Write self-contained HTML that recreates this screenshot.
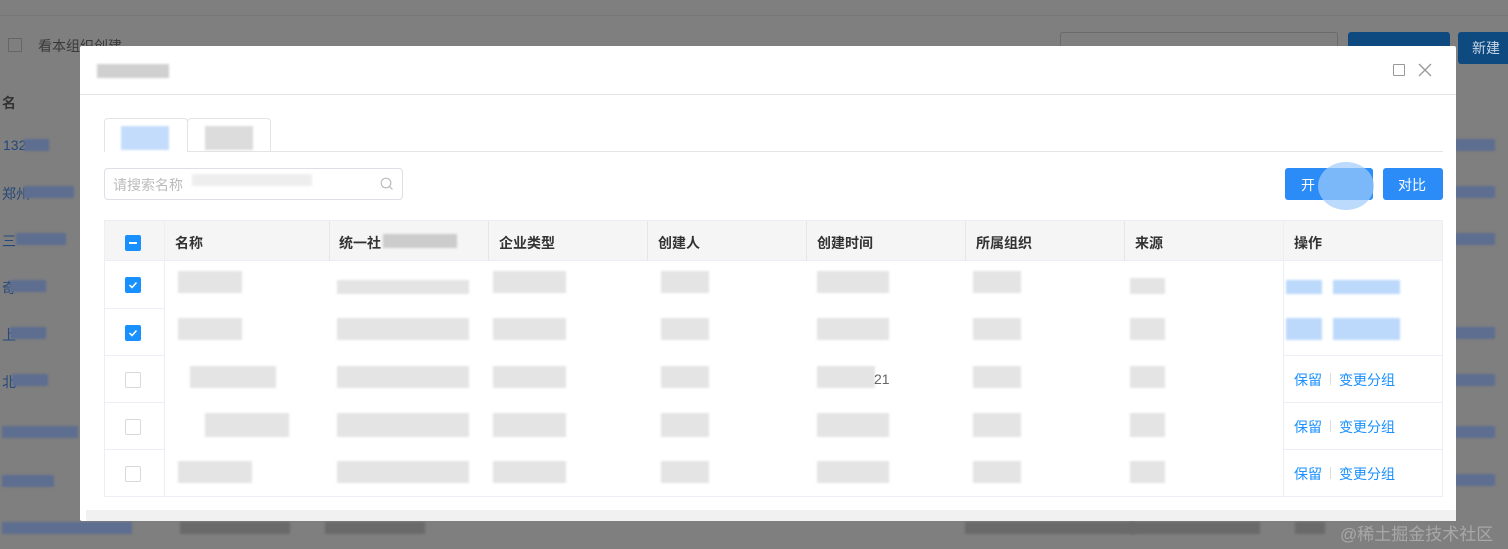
<!DOCTYPE html>
<html><head><meta charset="utf-8"><style>
*{margin:0;padding:0;box-sizing:border-box}
body{width:1508px;height:549px;overflow:hidden;background:#7f7f7f;font-family:"Liberation Sans","Noto Sans CJK SC",sans-serif;font-size:14px;position:relative}
.a{position:absolute}
.b{position:absolute;background:#e4e4e4;filter:blur(1px)}
.bg{position:absolute;background:#5e6e90;filter:blur(1px)}
.d{position:absolute;background:#6a6a6a;filter:blur(1px)}
.th{position:absolute;top:233px;font-size:14px;color:#333;font-weight:bold}
.op{position:absolute;color:#1890ff;font-size:14px}
.cb{position:absolute;left:125px;width:16px;height:16px;border:1px solid #d9d9d9;border-radius:2px;background:#fff}
.cb.on{background:#1890ff;border-color:#1890ff}
</style></head><body>
<!-- background page -->
<div class="a" style="left:0;top:15px;width:1508px;height:1px;background:#777"></div>
<div class="a" style="left:8px;top:38px;width:14px;height:14px;border:1px solid #666"></div>
<div class="a" style="left:38px;top:36px;color:#3a3a3a;font-size:14px">看本组织创建</div>
<div class="a" style="left:1060px;top:32px;width:278px;height:30px;border:1px solid #6a6a6a;border-radius:3px"></div>
<div class="a" style="left:1348px;top:32px;width:102px;height:32px;background:#0e4a80;border-radius:3px"></div>
<div class="a" style="left:1458px;top:32px;width:60px;height:32px;background:#0e4a80;border-radius:3px;color:#c8d6e6;padding:6px 0 0 14px">新建</div>
<div class="a" style="left:2px;top:93px;color:#333;font-weight:bold">名</div>
<div class="a" style="left:3px;top:137px;color:#24487a">132</div><div class="bg" style="left:24px;top:139px;width:25px;height:12px"></div>
<div class="a" style="left:2px;top:184px;color:#24487a">郑州</div><div class="bg" style="left:24px;top:186px;width:50px;height:12px"></div>
<div class="a" style="left:2px;top:231px;color:#24487a">三</div><div class="bg" style="left:16px;top:233px;width:50px;height:12px"></div>
<div class="a" style="left:2px;top:278px;color:#24487a">奇</div><div class="bg" style="left:10px;top:280px;width:36px;height:12px"></div>
<div class="a" style="left:2px;top:325px;color:#24487a">上</div><div class="bg" style="left:10px;top:327px;width:36px;height:12px"></div>
<div class="a" style="left:2px;top:372px;color:#24487a">北</div><div class="bg" style="left:12px;top:374px;width:36px;height:12px"></div>
<div class="bg" style="left:2px;top:426px;width:76px;height:12px"></div>
<div class="bg" style="left:2px;top:475px;width:52px;height:12px"></div>
<div class="bg" style="left:2px;top:522px;width:130px;height:12px"></div>
<div class="d" style="left:180px;top:522px;width:110px;height:12px"></div>
<div class="d" style="left:325px;top:522px;width:100px;height:12px"></div>
<div class="d" style="left:965px;top:522px;width:170px;height:12px"></div>
<div class="d" style="left:1130px;top:522px;width:130px;height:12px"></div>
<div class="d" style="left:1295px;top:522px;width:30px;height:12px"></div>
<div class="bg" style="left:1455px;top:139px;width:40px;height:12px"></div>
<div class="bg" style="left:1455px;top:186px;width:40px;height:12px"></div>
<div class="bg" style="left:1455px;top:233px;width:40px;height:12px"></div>
<div class="bg" style="left:1455px;top:327px;width:40px;height:12px"></div>
<div class="bg" style="left:1455px;top:374px;width:40px;height:12px"></div>
<div class="bg" style="left:1455px;top:426px;width:40px;height:12px"></div>
<div class="bg" style="left:1455px;top:474px;width:40px;height:12px"></div>
<div class="a" style="left:1340px;top:520px;color:#a8a8a8;font-size:17px">@稀土掘金技术社区</div>
<!-- modal -->
<div class="a" style="left:80px;top:46px;width:1376px;height:475px;background:#fff;border-radius:2px"></div>
<div class="a" style="left:86px;top:510px;width:1370px;height:11px;background:#f1f1f1"></div>
<div class="b" style="left:97px;top:64px;width:72px;height:14px;background:#d0d0d0"></div>
<div class="a" style="left:80px;top:94px;width:1376px;height:1px;background:#e4e4e4"></div>
<div class="a" style="left:1393px;top:64px;width:12px;height:12px;border:1.3px solid #999;border-radius:1px"></div>
<svg class="a" style="left:1418px;top:63px" width="14" height="14"><path d="M1 1L13 13M13 1L1 13" stroke="#999" stroke-width="1.3"/></svg>
<!-- tabs -->
<div class="a" style="left:104px;top:118px;width:84px;height:34px;border:1px solid #e4e4e4;border-bottom:none;border-radius:4px 4px 0 0"></div>
<div class="a" style="left:187px;top:118px;width:84px;height:33px;border:1px solid #e4e4e4;border-bottom:none;border-radius:4px 4px 0 0"></div>
<div class="a" style="left:104px;top:151px;width:1339px;height:1px;background:#e4e4e4"></div>
<div class="a" style="left:105px;top:151px;width:82px;height:1px;background:#fff"></div>
<div class="b" style="left:121px;top:126px;width:48px;height:24px;background:#c4dcfb"></div>
<div class="b" style="left:205px;top:126px;width:48px;height:24px;background:#dcdcdc"></div>
<!-- search -->
<div class="a" style="left:104px;top:168px;width:299px;height:32px;border:1px solid #dcdfe6;border-radius:4px"></div>
<div class="a" style="left:113px;top:175px;color:#bbb;font-size:14px">请搜索名称</div>
<div class="b" style="left:192px;top:174px;width:120px;height:12px;background:#eee"></div>
<svg class="a" style="left:380px;top:177px" width="14" height="14"><circle cx="6" cy="6" r="4.8" fill="none" stroke="#bbb" stroke-width="1.2"/><path d="M9.5 9.5L12.5 12.5" stroke="#bbb" stroke-width="1.2"/></svg>
<!-- buttons -->
<div class="a" style="left:1285px;top:168px;width:88px;height:32px;background:#2b8cf7;border-radius:3px;color:#fff;padding:7px 0 0 16px">开</div>
<div class="a" style="left:1318px;top:162px;width:56px;height:48px;border-radius:50%;background:#9ecbfb;opacity:.7"></div>
<div class="a" style="left:1383px;top:168px;width:60px;height:32px;background:#2b8cf7;border-radius:3px;color:#fff;padding:7px 0 0 15px">对比</div>
<!-- table -->
<div class="a" style="left:104px;top:220px;width:1339px;height:277px;border:1px solid #ebeef5"></div>
<div class="a" style="left:105px;top:221px;width:1337px;height:40px;background:#f5f5f5;border-bottom:1px solid #ebeef5"></div>
<div class="a" style="left:164px;top:221px;width:1px;height:276px;background:#ebeef5"></div>
<div class="a" style="left:329px;top:221px;width:1px;height:40px;background:#e6e6e6"></div>
<div class="a" style="left:488px;top:221px;width:1px;height:40px;background:#e6e6e6"></div>
<div class="a" style="left:647px;top:221px;width:1px;height:40px;background:#e6e6e6"></div>
<div class="a" style="left:806px;top:221px;width:1px;height:40px;background:#e6e6e6"></div>
<div class="a" style="left:965px;top:221px;width:1px;height:40px;background:#e6e6e6"></div>
<div class="a" style="left:1124px;top:221px;width:1px;height:40px;background:#e6e6e6"></div>
<div class="a" style="left:1283px;top:221px;width:1px;height:276px;background:#ebeef5"></div>
<div class="a" style="left:105px;top:308px;width:60px;height:1px;background:#ebeef5"></div>
<div class="a" style="left:105px;top:355px;width:60px;height:1px;background:#ebeef5"></div>
<div class="a" style="left:105px;top:402px;width:60px;height:1px;background:#ebeef5"></div>
<div class="a" style="left:105px;top:449px;width:60px;height:1px;background:#ebeef5"></div>
<div class="a" style="left:1284px;top:355px;width:158px;height:1px;background:#ebeef5"></div>
<div class="a" style="left:1284px;top:402px;width:158px;height:1px;background:#ebeef5"></div>
<div class="a" style="left:1284px;top:449px;width:158px;height:1px;background:#ebeef5"></div>
<div class="cb on" style="top:235px"><div style="position:absolute;left:3px;top:6px;width:8px;height:2px;background:#fff"></div></div>
<div class="th" style="left:175px">名称</div>
<div class="th" style="left:339px">统一社</div><div class="b" style="left:383px;top:234px;width:74px;height:14px;background:#ccc"></div>
<div class="th" style="left:499px">企业类型</div>
<div class="th" style="left:658px">创建人</div>
<div class="th" style="left:817px">创建时间</div>
<div class="th" style="left:976px">所属组织</div>
<div class="th" style="left:1135px">来源</div>
<div class="th" style="left:1294px">操作</div>
<!-- rows -->
<div class="cb on" style="top:277px"><svg width="14" height="14" style="position:absolute;left:0;top:0"><path d="M3.5 7L6 9.5L10.5 4.5" stroke="#fff" stroke-width="1.5" fill="none"/></svg></div>
<div class="cb on" style="top:325px"><svg width="14" height="14" style="position:absolute;left:0;top:0"><path d="M3.5 7L6 9.5L10.5 4.5" stroke="#fff" stroke-width="1.5" fill="none"/></svg></div>
<div class="cb" style="top:372px"></div>
<div class="cb" style="top:419px"></div>
<div class="cb" style="top:466px"></div>

<div class="b" style="left:178px;top:271px;width:64px;height:22px"></div>
<div class="b" style="left:178px;top:318px;width:64px;height:22px"></div>
<div class="b" style="left:190px;top:366px;width:86px;height:22px"></div>
<div class="b" style="left:205px;top:413px;width:84px;height:24px"></div>
<div class="b" style="left:178px;top:461px;width:74px;height:22px"></div>
<div class="b" style="left:337px;top:280px;width:132px;height:14px"></div>
<div class="b" style="left:337px;top:318px;width:132px;height:22px"></div>
<div class="b" style="left:337px;top:366px;width:132px;height:22px"></div>
<div class="b" style="left:337px;top:413px;width:132px;height:24px"></div>
<div class="b" style="left:337px;top:461px;width:132px;height:22px"></div>
<div class="b" style="left:493px;top:271px;width:73px;height:22px"></div>
<div class="b" style="left:493px;top:318px;width:73px;height:22px"></div>
<div class="b" style="left:493px;top:366px;width:73px;height:22px"></div>
<div class="b" style="left:493px;top:413px;width:73px;height:24px"></div>
<div class="b" style="left:493px;top:461px;width:73px;height:22px"></div>
<div class="b" style="left:661px;top:271px;width:48px;height:22px"></div>
<div class="b" style="left:661px;top:318px;width:48px;height:22px"></div>
<div class="b" style="left:661px;top:366px;width:48px;height:22px"></div>
<div class="b" style="left:661px;top:413px;width:48px;height:24px"></div>
<div class="b" style="left:661px;top:461px;width:48px;height:22px"></div>
<div class="b" style="left:817px;top:271px;width:72px;height:22px"></div>
<div class="b" style="left:817px;top:318px;width:72px;height:22px"></div>
<div class="b" style="left:817px;top:366px;width:58px;height:22px"></div><div class="a" style="left:874px;top:371px;color:#666">21</div>
<div class="b" style="left:817px;top:413px;width:72px;height:24px"></div>
<div class="b" style="left:817px;top:461px;width:72px;height:22px"></div>
<div class="b" style="left:973px;top:271px;width:48px;height:22px"></div>
<div class="b" style="left:973px;top:318px;width:48px;height:22px"></div>
<div class="b" style="left:973px;top:366px;width:48px;height:22px"></div>
<div class="b" style="left:973px;top:413px;width:48px;height:24px"></div>
<div class="b" style="left:973px;top:461px;width:48px;height:22px"></div>
<div class="b" style="left:1130px;top:278px;width:35px;height:16px"></div>
<div class="b" style="left:1130px;top:318px;width:35px;height:22px"></div>
<div class="b" style="left:1130px;top:366px;width:35px;height:22px"></div>
<div class="b" style="left:1130px;top:413px;width:35px;height:24px"></div>
<div class="b" style="left:1130px;top:461px;width:35px;height:22px"></div>
<div class="b" style="left:1286px;top:280px;width:36px;height:14px;background:#bcd8fb"></div>
<div class="b" style="left:1333px;top:280px;width:67px;height:14px;background:#bcd8fb"></div>
<div class="b" style="left:1286px;top:318px;width:36px;height:22px;background:#bcd8fb"></div>
<div class="b" style="left:1333px;top:318px;width:67px;height:22px;background:#bcd8fb"></div>
<div class="op" style="left:1294px;top:370px">保留</div><div class="a" style="left:1330px;top:373px;width:1px;height:12px;background:#ddd"></div><div class="op" style="left:1339px;top:370px">变更分组</div>
<div class="op" style="left:1294px;top:417px">保留</div><div class="a" style="left:1330px;top:420px;width:1px;height:12px;background:#ddd"></div><div class="op" style="left:1339px;top:417px">变更分组</div>
<div class="op" style="left:1294px;top:464px">保留</div><div class="a" style="left:1330px;top:467px;width:1px;height:12px;background:#ddd"></div><div class="op" style="left:1339px;top:464px">变更分组</div>
</body></html>
